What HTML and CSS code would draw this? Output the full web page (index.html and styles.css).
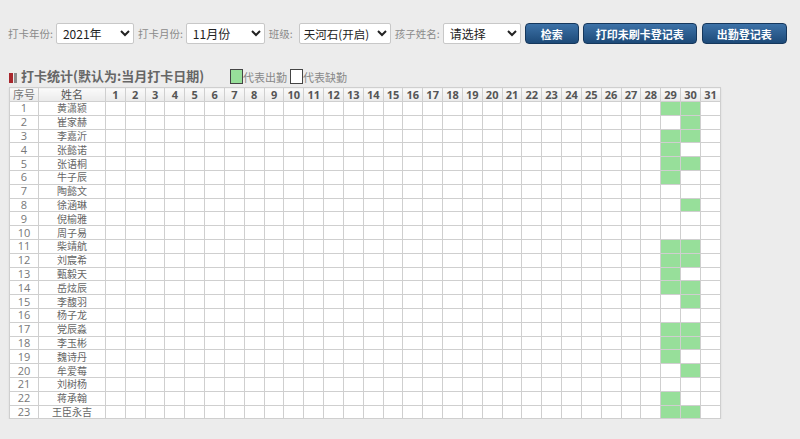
FILE: index.html
```html
<!DOCTYPE html>
<html lang="zh-CN">
<head>
    <meta charset="UTF-8">
    <meta name="viewport" content="width=device-width, initial-scale=1.0">
    <title>打卡统计</title>
    <link rel="stylesheet" href="styles.css">
</head>
<body>
    <form class="toolbar" onsubmit="return false">
        <label for="year">打卡年份:</label>
        <select id="year" class="sel-year">
            <option>2021年</option>
        </select>
        <label for="month">打卡月份:</label>
        <select id="month" class="sel-month">
            <option>11月份</option>
        </select>
        <label for="cls" class="lbl-class">班级:</label>
        <select id="cls" class="sel-class">
            <option>天河石(开启)</option>
        </select>
        <label for="child">孩子姓名:</label>
        <select id="child" class="sel-child">
            <option>请选择</option>
        </select>
        <button type="submit" class="btn btn-search">检索</button>
        <button type="button" class="btn btn-print">打印未刷卡登记表</button>
        <button type="button" class="btn btn-sheet">出勤登记表</button>
    </form>

    <div class="title-bar">
        <span class="title-icon"><i class="red"></i><i class="grey"></i></span>
        <h3>打卡统计(默认为:当月打卡日期)</h3>
        <span class="legend"><i class="box on"></i>代表出勤</span>
        <span class="legend"><i class="box"></i>代表缺勤</span>
    </div>

    <table class="sheet" id="sheet">
        <colgroup id="cols">
            <col class="w-no">
            <col class="w-name">
        </colgroup>
        <thead>
            <tr id="head-row">
                <th class="col-no">序号</th>
                <th class="col-name">姓名</th>
            </tr>
        </thead>
        <tbody id="sheet-body"></tbody>
    </table>

    <script>
        // name, present on 29th, present on 30th
        const students = [
            ["黄潇颍", 1, 1], ["崔家赫", 0, 1], ["李嘉沂", 1, 1], ["张懿诺", 1, 0],
            ["张语桐", 1, 1], ["牛子辰", 1, 0], ["陶懿文", 0, 0], ["徐涵琳", 0, 1],
            ["倪榆雅", 0, 0], ["周子易", 0, 0], ["柴靖航", 1, 1], ["刘宸希", 1, 1],
            ["甄毅天", 1, 0], ["岳炫辰", 1, 1], ["李馥羽", 0, 1], ["杨子龙", 0, 0],
            ["党辰淼", 1, 1], ["李玉彬", 1, 1], ["魏诗丹", 1, 0], ["牟爱莓", 0, 1],
            ["刘树杨", 0, 0], ["蒋承翰", 1, 0], ["王臣永吉", 1, 1]
        ];

        const cols = document.getElementById("cols");
        const head = document.getElementById("head-row");
        for (let d = 1; d <= 31; d++) {
            cols.insertAdjacentHTML("beforeend", `<col>`);
            head.insertAdjacentHTML("beforeend", `<th>${d}</th>`);
        }

        const body = document.getElementById("sheet-body");
        students.forEach((s, i) => {
            let row = `<tr><td class="col-no">${i + 1}</td><td class="col-name">${s[0]}</td>`;
            for (let d = 1; d <= 31; d++) {
                let on = (d === 29 && s[1]) || (d === 30 && s[2]);
                row += on ? `<td class="on"></td>` : `<td></td>`;
            }
            body.insertAdjacentHTML("beforeend", row + "</tr>");
        });
    </script>
</body>
</html>
```

FILE: styles.css
```css
/* General Styles */
body {
    margin: 0;
    padding: 0 8px;
    background-color: #ececec;
    font-family: "Open Sans", "Noto Sans CJK SC", sans-serif;
    color: #555;
}

/* Toolbar */
.toolbar {
    display: flex;
    align-items: center;
    height: 21px;
    margin-top: 23px;
    white-space: nowrap;
}

.toolbar label {
    font-family: "Noto Sans CJK SC", sans-serif;
    font-size: 10.5px;
    color: #8a8a8a;
    margin-right: 3px;
    flex-shrink: 0;
}

.toolbar select {
    flex-shrink: 0;
    height: 21px;
    padding: 0 2px;
    margin-right: 4px;
    font-family: "Noto Sans CJK SC", sans-serif;
    font-size: 12px;
    color: #222;
    background-color: #fff;
    border: 1px solid #c8c8c8;
    border-radius: 2px;
}

.sel-year { width: 78px; }
.sel-month { width: 79px; }
.lbl-class { margin-right: 6px !important; }
.sel-class { width: 92px; padding: 0 !important; font-size: 11.5px !important; }
.sel-child { width: 78px; }

.btn {
    flex-shrink: 0;
    height: 21px;
    padding: 0;
    margin-right: 4px;
    font-family: "Noto Sans CJK SC", sans-serif;
    font-size: 11px;
    font-weight: bold;
    color: #fff;
    background: linear-gradient(#3d72a8, #1d4a78);
    border: 1px solid #15375c;
    border-radius: 4px;
    cursor: pointer;
}

.btn-search { width: 54px; }
.btn-print { width: 114px; }
.btn-sheet { width: 85px; margin-left: 1px; }

/* Title */
.title-bar {
    display: flex;
    align-items: flex-end;
    height: 16px;
    margin-top: 24px;
    margin-left: 1px;
}

.title-icon {
    display: flex;
    align-items: flex-end;
    height: 14px;
    margin-right: 4px;
}

.title-icon i {
    display: block;
    width: 4px;
    height: 10px;
    margin-bottom: 1px;
}

.title-icon .red { background-color: #a8262c; margin-right: 1px; }
.title-icon .grey { background-color: #8c8c8c; width: 3px; }

.title-bar h3 {
    margin: 0 26px 0 0;
    font-family: "Noto Sans CJK SC", sans-serif;
    font-size: 13px;
    line-height: 16px;
    font-weight: bold;
    color: #666;
}

.legend {
    display: flex;
    align-items: flex-end;
    font-family: "Noto Sans CJK SC", sans-serif;
    font-size: 11px;
    line-height: 13px;
    color: #888;
    margin-right: 3px;
}

.legend .box {
    display: block;
    width: 11px;
    height: 13px;
    background-color: #fff;
    border: 1px solid #444;
}

.legend .box.on { background-color: #97df9a; }

/* Table */
.sheet {
    width: 712px;
    table-layout: fixed;
    margin-top: 3px;
    margin-left: 1px;
    border-collapse: collapse;
    background-color: #fff;
    border: 1px solid #c4c4c4;
    box-shadow: 0 1px 2px rgba(0, 0, 0, 0.08);
}

.sheet .w-no { width: 29px; }
.sheet .w-name { width: 67px; }

.sheet th,
.sheet td {
    padding: 0;
    border: 1px solid #cfcfcf;
    text-align: center;
    font-size: 11px;
    overflow: hidden;
    white-space: nowrap;
}

.sheet th {
    height: 13px;
    line-height: 13px;
    font-weight: bold;
    color: #555;
    background: linear-gradient(#fafafa, #eaeaea);
}

.sheet td {
    height: 12.8px;
    line-height: 12px;
    color: #666;
}

.sheet .col-no { color: #777; }
.sheet .col-name {
    font-family: "Noto Sans CJK SC", sans-serif;
    font-size: 10px;
}
.sheet th.col-name,
.sheet th.col-no {
    font-family: "Noto Sans CJK SC", sans-serif;
    font-size: 11px;
    font-weight: normal;
}

.sheet td.on { background-color: #97df9a; }
```
